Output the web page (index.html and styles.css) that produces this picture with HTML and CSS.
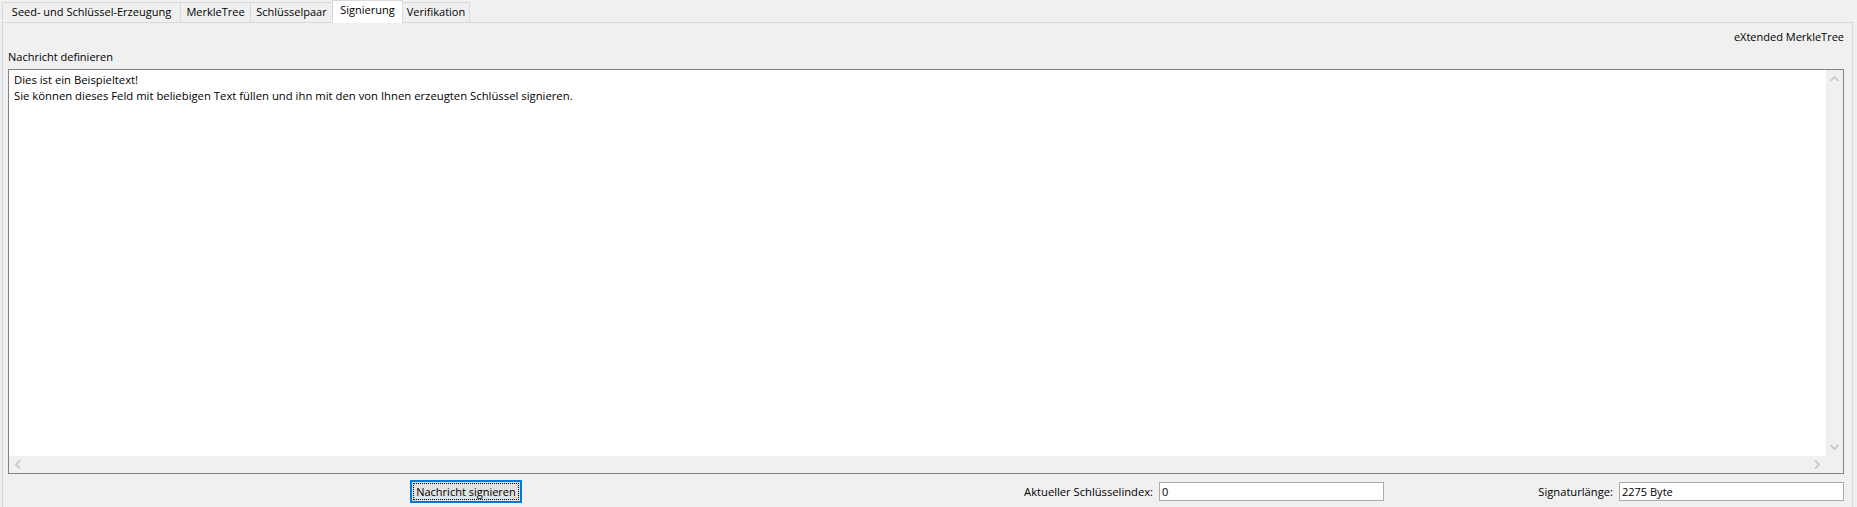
FILE: index.html
```html
<!DOCTYPE html>
<html lang="de">
<head>
<meta charset="utf-8">
<title>Signierung</title>
<link rel="stylesheet" href="styles.css">
</head>
<body>
<div class="tabs">
  <div class="tab tab-seed">Seed- und Schlüssel-Erzeugung</div>
  <div class="tab tab-merkle">MerkleTree</div>
  <div class="tab tab-pair">Schlüsselpaar</div>
  <div class="tab tab-sign active">Signierung</div>
  <div class="tab tab-verify">Verifikation</div>
</div>
<div class="panel">
  <div class="header">eXtended MerkleTree</div>
  <div class="section-label">Nachricht definieren</div>
  <div class="textbox">
    <div class="text-content">Dies ist ein Beispieltext!<br>Sie können dieses Feld mit beliebigen Text füllen und ihn mit den von Ihnen erzeugten Schlüssel signieren.</div>
    <div class="vscroll">
      <span class="arrow"><svg width="17" height="17" viewBox="0 0 17 17"><path d="M4.5 11 L8.5 7 L12.5 11" fill="none" stroke="#c4c4c4" stroke-width="1.7"/></svg></span>
      <span class="arrow"><svg width="17" height="17" viewBox="0 0 17 17"><path d="M4.5 6 L8.5 10 L12.5 6" fill="none" stroke="#c4c4c4" stroke-width="1.7"/></svg></span>
    </div>
    <div class="hscroll">
      <span class="arrow"><svg width="17" height="17" viewBox="0 0 17 17"><path d="M11 4.5 L7 8.5 L11 12.5" fill="none" stroke="#c4c4c4" stroke-width="1.7"/></svg></span>
      <span class="arrow"><svg width="17" height="17" viewBox="0 0 17 17"><path d="M6 4.5 L10 8.5 L6 12.5" fill="none" stroke="#c4c4c4" stroke-width="1.7"/></svg></span>
    </div>
    <div class="corner"></div>
  </div>
  <div class="actions">
    <div class="col col-button"><button class="btn" type="button">Nachricht signieren</button></div>
    <div class="col col-field"><span class="field-label">Aktueller Schlüsselindex:</span><div class="field">0</div></div>
    <div class="col col-field"><span class="field-label">Signaturlänge:</span><div class="field">2275 Byte</div></div>
  </div>
</div>
</body>
</html>
```

FILE: styles.css
```css
* { box-sizing: border-box; }

html, body {
  margin: 0;
  padding: 0;
}

body {
  width: 1857px;
  height: 507px;
  overflow: hidden;
  background: #f0f0f0;
  color: #000;
  font-family: "Open Sans", "Noto Sans", sans-serif;
  font-size: 11px;
}

/* ---------- tabs ---------- */
.tabs {
  display: flex;
  align-items: flex-start;
  height: 22px;
  padding-left: 2px;
  position: relative;
  z-index: 1;
}

.tab {
  height: 20px;
  margin-top: 2px;
  padding-top: 1px;
  line-height: 16px;
  text-align: center;
  white-space: nowrap;
  background: #f0f0f0;
  border: 1px solid #d9d9d9;
  border-bottom: none;
  border-right: none;
}

.tab-seed { width: 178px; }
.tab-merkle { width: 70px; }
.tab-pair { width: 82px; }
.tab-sign { width: 71px; }
.tab-verify { width: 67px; border-right: 1px solid #d9d9d9; }

.tab.active {
  height: 23px;
  margin-top: 0;
  background: #fff;
  border-right: 1px solid #d9d9d9;
}

.tab.active + .tab { border-left: none; }

/* ---------- panel ---------- */
.panel {
  display: flex;
  flex-direction: column;
  height: 487px;
  margin: 0 4px 0 2px;
  padding: 6px 8px 0 5px;
  border: 1px solid #d9d9d9;
}

.header {
  line-height: 16px;
  text-align: right;
}

.section-label {
  margin-top: 4px;
  line-height: 16px;
}

/* ---------- text box ---------- */
.textbox {
  margin-top: 4px;
  height: 405px;
  border: 1px solid #828282;
  display: grid;
  grid-template-columns: 1fr 17px;
  grid-template-rows: 1fr 17px;
  background: #fff;
}

.text-content {
  padding: 2px 5px;
  font-size: 11.3px;
  line-height: 16px;
  white-space: nowrap;
  overflow: hidden;
}

.vscroll {
  background: #f0f0f0;
  display: flex;
  flex-direction: column;
  justify-content: space-between;
}

.hscroll {
  background: #f0f0f0;
  display: flex;
  justify-content: space-between;
}

.corner {
  background: #f0f0f0;
}

.arrow {
  display: block;
  width: 17px;
  height: 17px;
}

.arrow svg { display: block; }

/* ---------- bottom row ---------- */
.actions {
  margin-top: 6px;
  height: 23px;
  display: grid;
  grid-template-columns: 916px 460px 460px;
}

.col {
  display: flex;
  align-items: center;
}

.col-button { justify-content: center; }

.col-field {
  justify-content: flex-end;
  gap: 6px;
}

.btn {
  width: 112px;
  height: 23px;
  padding: 0;
  margin: 0;
  background: #e1e1e1;
  border: 2px solid #0078d7;
  outline: 1px dotted #000;
  outline-offset: -4px;
  color: #000;
  font-family: "Open Sans", "Noto Sans", sans-serif;
  font-size: 11px;
  line-height: 17px;
  white-space: nowrap;
}

.field-label {
  font-size: 11.2px;
  line-height: 16px;
}

.field {
  width: 225px;
  height: 19px;
  background: #fff;
  border: 1px solid #a9a9a9;
  padding-left: 2px;
  line-height: 17px;
  font-size: 11px;
}
```
